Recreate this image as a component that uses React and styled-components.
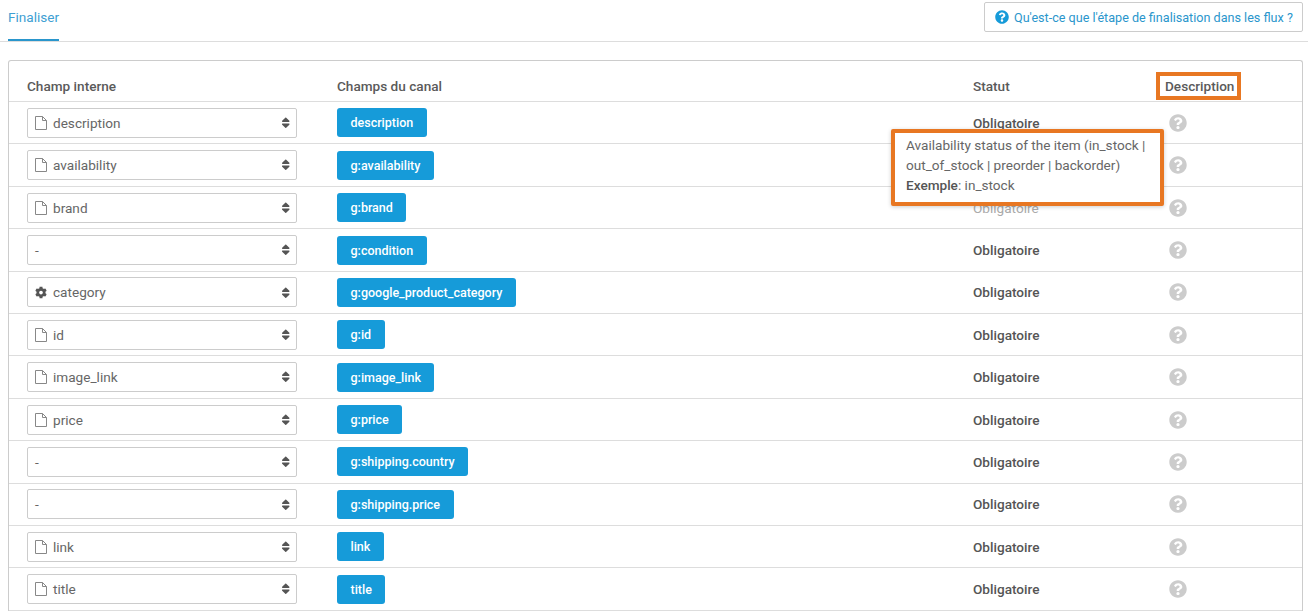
import React from 'react';
import styled, { createGlobalStyle } from 'styled-components';
import { FaCog, FaSort, FaQuestionCircle } from 'react-icons/fa';

const GlobalStyle = createGlobalStyle`
  html, body {
    margin: 0;
    padding: 0;
    height: 612px;
    overflow: hidden;
    background: #fff;
    font-family: Roboto, "Liberation Sans", sans-serif;
    font-size: 13.6px;
    color: #555;
  }
`;

const Page = styled.div`
  padding: 0 5px 0 8px;
`;

const TabBar = styled.div`
  display: flex;
  justify-content: space-between;
  align-items: flex-start;
  height: 41px;
  border-bottom: 1px solid #ddd;
  margin-right: -5px;
  margin-left: -8px;
  padding: 0 5px 0 8px;
`;

const Tab = styled.div`
  height: 39px;
  line-height: 34px;
  color: #3f9fd3;
  border-bottom: 2px solid #2a96cc;
`;

const HelpLink = styled.a`
  display: flex;
  align-items: center;
  gap: 5px;
  box-sizing: border-box;
  width: 319px;
  height: 30px;
  margin-top: 2px;
  padding-left: 10px;
  white-space: nowrap;
  color: #2a96cc;
  font-size: 12.6px;
  background: #fff;
  border: 1px solid #ccc;
  border-radius: 2px;
`;

const HelpIcon = styled(FaQuestionCircle)`
  color: #169bd9;
  font-size: 14px;
  flex-shrink: 0;
`;

const Card = styled.div`
  position: relative;
  margin-top: 18px;
  border: 1px solid #ccc;
  border-bottom: none;
  border-radius: 3px 3px 0 0;
`;

const Row = styled.div`
  display: grid;
  grid-template-columns: 310px 636px 192px 1fr;
  align-items: center;
  box-sizing: border-box;
  height: ${({ $head }) => ($head ? '41px' : '42.4px')};
  padding: 0.3px 0 0 18px;
  border-bottom: 1px solid #ddd;
`;

const HeadCell = styled.div`
  font-weight: 500;
  color: #5a5a5a;
  padding-top: 9px;
`;

const Highlight = styled.span`
  display: inline-block;
  outline: 4px solid #e87722;
  padding: 0 3px 0 5px;
  margin-left: -5px;
  line-height: 20px;
`;

const Select = styled.div`
  display: flex;
  align-items: center;
  box-sizing: border-box;
  width: 270px;
  height: 30px;
  padding: 0 4px 0 7px;
  border: 1px solid #ccc;
  border-radius: 2px;
  background: #fff;
  color: #666;
`;

const SelectIcon = styled.span`
  display: flex;
  align-items: center;
  justify-content: center;
  width: 12px;
  margin-right: 6px;
  color: ${({ $dark }) => ($dark ? '#555' : '#888')};
  font-size: 13px;
`;

const SelectLabel = styled.span`
  flex: 1;
`;

const SortIcon = styled(FaSort)`
  color: #555;
  font-size: 13.5px;
`;

const Badge = styled.span`
  justify-self: start;
  display: inline-block;
  box-sizing: border-box;
  height: 29px;
  line-height: 29px;
  padding: 0 13.5px;
  background: #169bd9;
  color: #fff;
  font-size: 12.5px;
  font-weight: 500;
  border-radius: 3px;
`;

const Status = styled.div`
  font-weight: ${({ $faded }) => ($faded ? 400 : 500)};
  color: ${({ $faded }) => ($faded ? '#aaa' : '#555')};
`;

const HelpCell = styled.div`
  display: flex;
  padding-left: 4px;
`;

const QuestionIcon = styled(FaQuestionCircle)`
  color: #ccc;
  font-size: 18px;
`;

const Tooltip = styled.div`
  position: absolute;
  left: 882px;
  top: 68px;
  box-sizing: border-box;
  width: 273px;
  height: 77px;
  padding: 2px 11px;
  background: #fff;
  border: 4px solid #e87722;
  border-radius: 2px;
  line-height: 20px;
  color: #666;
  box-shadow: 0 1px 4px rgba(0, 0, 0, 0.2);

  strong {
    font-weight: 500;
    color: #555;
  }
`;

const rows = [
  ['file', 'description', 'description'],
  ['file', 'availability', 'g:availability'],
  ['file', 'brand', 'g:brand'],
  ['', '-', 'g:condition'],
  ['cog', 'category', 'g:google_product_category'],
  ['file', 'id', 'g:id'],
  ['file', 'image_link', 'g:image_link'],
  ['file', 'price', 'g:price'],
  ['', '-', 'g:shipping.country'],
  ['', '-', 'g:shipping.price'],
  ['file', 'link', 'link'],
  ['file', 'title', 'title'],
];

// outline page with folded corner, thinner than the package icons
const FileIcon = () => (
  <svg width="12" height="14" viewBox="0 0 12 14" fill="none" stroke="currentColor">
    <path d="M.5.5h7l4 4v9H.5z" />
    <path d="M7.5.5v4h4" />
  </svg>
);

const FieldIcon = ({ type }) => {
  if (type === 'file') {
    return (
      <SelectIcon>
        <FileIcon />
      </SelectIcon>
    );
  }
  if (type === 'cog') {
    return (
      <SelectIcon $dark>
        <FaCog />
      </SelectIcon>
    );
  }
  return null;
};

const App = () => {
  return (
    <Page>
      <GlobalStyle />
      <TabBar>
        <Tab>Finaliser</Tab>
        <HelpLink>
          <HelpIcon />
          Qu'est-ce que l'étape de finalisation dans les flux ?
        </HelpLink>
      </TabBar>
      <Card>
        <Row $head>
          <HeadCell>Champ interne</HeadCell>
          <HeadCell>Champs du canal</HeadCell>
          <HeadCell>Statut</HeadCell>
          <HeadCell>
            <Highlight>Description</Highlight>
          </HeadCell>
        </Row>
        {rows.map(([icon, field, channel]) => (
          <Row key={channel}>
            <Select>
              <FieldIcon type={icon} />
              <SelectLabel>{field}</SelectLabel>
              <SortIcon />
            </Select>
            <Badge>{channel}</Badge>
            <Status $faded={field === 'brand'}>Obligatoire</Status>
            <HelpCell>
              <QuestionIcon />
            </HelpCell>
          </Row>
        ))}
        <Tooltip>
          Availability status of the item (in_stock | out_of_stock | preorder | backorder)
          <br />
          <strong>Exemple</strong>: in_stock
        </Tooltip>
      </Card>
    </Page>
  );
};

export default App;
